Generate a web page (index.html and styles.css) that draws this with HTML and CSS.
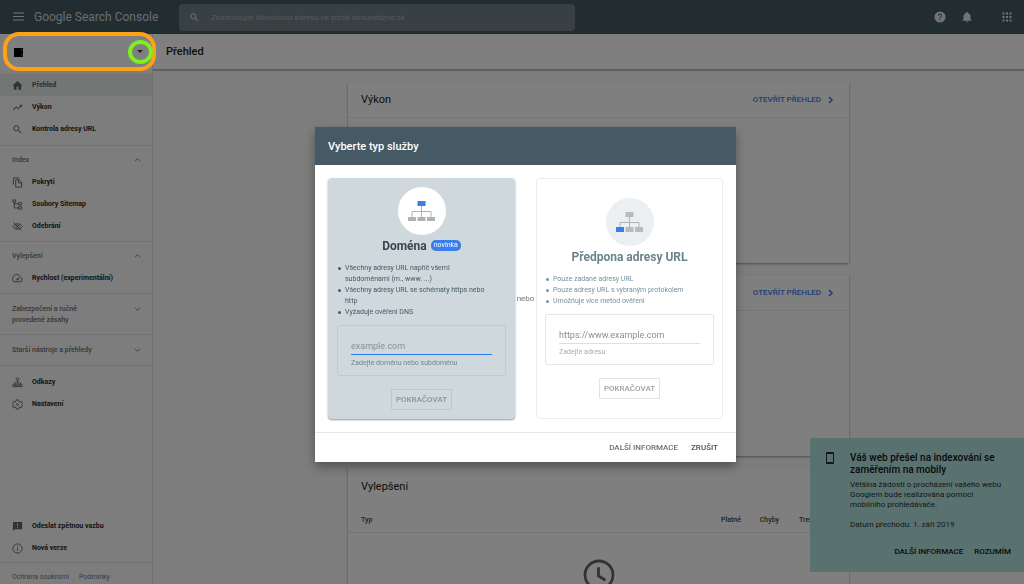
FILE: index.html
```html
<!DOCTYPE html>
<html lang="cs">
<head>
<meta charset="utf-8">
<meta name="viewport" content="width=device-width, initial-scale=1">
<title>Google Search Console</title>
<link rel="stylesheet" href="styles.css">
</head>
<body>
<div class="app">
  <header class="topbar">
    <button class="icon-btn" aria-label="Nabídka"><svg class="ic-menu" viewBox="0 0 12 12"><path d="M0 2h11M0 5.500h11M0 9h11" stroke="currentColor" stroke-width="1.200"/></svg></button>
    <a class="brand" href="#">Google Search Console</a>
    <label class="search">
      <svg class="ic" viewBox="0 0 24 24"><path fill="currentColor" d="M15.500 14h-.8l-.3-.3A6.500 6.500 0 1 0 13.700 14.400l.3.300v.8l5 5 1.500-1.500zm-6 0a4.500 4.500 0 1 1 0-9 4.500 4.500 0 0 1 0 9z"/></svg>
      <input type="search" aria-label="Kontrola adresy URL" placeholder="Zkontrolujte libovolnou adresu ve zdroji besuvetizne.sk">
    </label>
    <div class="tools">
      <button class="icon-btn" aria-label="Nápověda"><svg class="ic-lg" viewBox="0 0 24 24"><path fill="currentColor" d="M12 1a11 11 0 1 0 0 22 11 11 0 0 0 0-22zm1 18h-2v-2h2zm2.100-7.700-.9.900C13.400 12.900 13 13.500 13 15h-2v-.5c0-1.100.4-2.100 1.200-2.800l1.200-1.300A2 2 0 1 0 10 9H8a4 4 0 1 1 7.100 2.300z"/></svg></button>
      <button class="icon-btn" aria-label="Oznámení"><svg class="ic-lg" viewBox="0 0 24 24"><path fill="currentColor" d="M12 23a2 2 0 0 0 2-2h-4a2 2 0 0 0 2 2zm7-7v-5c0-3.600-2-6.100-5.500-6.800V3a1.500 1.500 0 0 0-3 0v1.200C7 4.900 5 7.400 5 11v5l-2 2.500v1h18v-1z"/></svg></button>
      <button class="icon-btn apps" aria-label="Aplikace"><svg class="ic-lg" viewBox="0 0 24 24"><path fill="currentColor" d="M3 3h4v4H3zm7 0h4v4h-4zM17 3h4v4h-4zM3 10h4v4H3zm7 0h4v4h-4zm7 0h4v4h-4zM3 17h4v4H3zm7 0h4v4h-4zm7 0h4v4h-4z"/></svg></button>
    </div>
  </header>

  <div class="shell">
    <aside class="sidebar">
      <button class="property" aria-label="Vybrat službu"><svg class="favicon" viewBox="0 0 9 9"><path fill="#000" d="M0 0h9v9H0z"/><path d="M7 1l1 1.500M8 6v1.500" stroke="#bbb" stroke-width=".8"/></svg><svg class="caret" viewBox="0 0 6 4"><path d="M0 0h6L3 3z" fill="currentColor"/></svg></button>
      <nav class="nav">
        <div class="group group-top">
          <a class="item active" href="#"><svg class="ic" viewBox="0 0 24 24"><path fill="currentColor" d="M10 21v-7h4v7h6v-9h3L12 2 1 12h3v9z"/></svg>Přehled</a>
          <a class="item" href="#"><svg class="ic" viewBox="0 0 24 24"><path fill="currentColor" d="M16 6l2.300 2.300-4.900 4.900-4-4L2 16.600 3.400 18l6-6 4 4 6.300-6.300L22 12V6z"/></svg>Výkon</a>
          <a class="item" href="#"><svg class="ic" viewBox="0 0 24 24"><path fill="currentColor" d="M15.500 14h-.8l-.3-.3A6.500 6.500 0 1 0 13.700 14.400l.3.300v.8l5 5 1.500-1.500zm-6 0a4.500 4.500 0 1 1 0-9 4.500 4.500 0 0 1 0 9z"/></svg>Kontrola adresy URL</a>
        </div>
        <div class="group">
          <button class="section">Index<svg class="chev" viewBox="0 0 8 6"><path d="M1 4.500l3-3 3 3"/></svg></button>
          <a class="item" href="#"><svg class="ic line" viewBox="0 0 24 24"><path d="M3 17V2h13M8 6h7l6 6v10H8zM14 6v7h7"/></svg>Pokrytí</a>
          <a class="item" href="#"><svg class="ic line" viewBox="0 0 24 24"><path d="M2 2h6v5H2zM14 8h7v5h-7zM14 17h7v5h-7zM5 7v12.500h9M5 10.500h9"/></svg>Soubory Sitemap</a>
          <a class="item" href="#"><svg class="ic line" viewBox="0 0 24 24"><path d="M2 12c4-8 16-8 20 0-4 8-16 8-20 0zM3 3l18 18"/><circle cx="12" cy="12" r="3.500"/></svg>Odebrání</a>
        </div>
        <div class="group">
          <button class="section">Vylepšení<svg class="chev" viewBox="0 0 8 6"><path d="M1 4.500l3-3 3 3"/></svg></button>
          <a class="item" href="#"><svg class="ic line" viewBox="0 0 24 24"><path d="M17 6A9 9 0 0 0 4 19h16a9 9 0 0 0 1-9M11 15l8-8"/><circle cx="12" cy="14" r="1.500"/></svg>Rychlost (experimentální)</a>
        </div>
        <div class="group closed">
          <button class="section"><span>Zabezpečení a ručně<br>provedené zásahy</span><svg class="chev" viewBox="0 0 8 6"><path d="M1 1.500l3 3 3-3"/></svg></button>
        </div>
        <div class="group closed">
          <button class="section">Starší nástroje a přehledy<svg class="chev" viewBox="0 0 8 6"><path d="M1 1.500l3 3 3-3"/></svg></button>
        </div>
        <div class="group group-links">
          <a class="item" href="#"><svg class="ic line" viewBox="0 0 24 24"><circle cx="12" cy="5" r="3"/><path d="M12 8v5M5 17v-4h14v4M2 17h6v4H2zM9 17h6v4H9zM16 17h6v4h-6z"/></svg>Odkazy</a>
          <a class="item" href="#"><svg class="ic line" viewBox="0 0 24 24"><path d="M9.500 2h5l.8 3.200 2 1.200 3.200-1 2.500 4.200-2.400 2.400 2.400 2.400-2.500 4.200-3.200-1-2 1.200-.8 3.200h-5l-.8-3.200-2-1.200-3.200 1L1 14.400 3.400 12 1 9.600l2.500-4.200 3.200 1 2-1.200z"/><circle cx="12" cy="12" r="2"/></svg>Nastavení</a>
        </div>
      </nav>
      <div class="bottom">
        <a class="item" href="#"><svg class="ic" viewBox="0 0 24 24"><path fill="currentColor" fill-rule="evenodd" d="M2 2h20v16H6l-4 4zm9 3v6h2V5zm0 8v2h2v-2z"/></svg>Odeslat zpětnou vazbu</a>
        <a class="item" href="#"><svg class="ic line" viewBox="0 0 24 24"><circle cx="12" cy="12" r="10"/><path d="M12 7v2M12 11v6"/></svg>Nová verze</a>
      </div>
      <div class="legal"><a href="#">Ochrana soukromí</a><a href="#">Podmínky</a></div>
    </aside>

    <main class="main">
      <div class="titlebar"><h1>Přehled</h1></div>
      <div class="content">
        <section class="card">
          <div class="card-head"><h2>Výkon</h2><a href="#">OTEVŘÍT PŘEHLED<svg class="next" viewBox="0 0 6 8"><path d="M1 1l3 3-3 3"/></svg></a></div>
        </section>
        <section class="card">
          <div class="card-head"><h2 aria-label="Pokrytí"></h2><a href="#">OTEVŘÍT PŘEHLED<svg class="next" viewBox="0 0 6 8"><path d="M1 1l3 3-3 3"/></svg></a></div>
        </section>
        <section class="card">
          <div class="card-head plain"><h2>Vylepšení</h2></div>
          <table class="table">
            <thead><tr><th class="wide">Typ</th><th>Platné</th><th>Chyby</th><th>Trend</th><th class="last"></th></tr></thead>
          </table>
          <svg class="clock" viewBox="0 0 24 24"><circle cx="12" cy="12" r="8"/><path d="M11.700 7.500v5l4 2.500"/></svg>
        </section>
      </div>
    </main>
  </div>

  <aside class="toast">
    <svg class="phone" viewBox="0 0 8 12"><path fill="currentColor" fill-rule="evenodd" d="M1 0h6a1 1 0 0 1 1 1v10a1 1 0 0 1-1 1H1a1 1 0 0 1-1-1V1a1 1 0 0 1 1-1zm0 2v8h6V2z"/></svg>
    <div class="toast-text">
      <h3>Váš web přešel na indexování se zaměřením na mobily</h3>
      <p>Většina žádostí o procházení vašeho webu Googlem bude realizována pomocí<br>mobilního prohledávače.</p>
      <p class="date">Datum přechodu: 1. září 2019</p>
      <div class="toast-actions"><button>DALŠÍ INFORMACE</button><button>ROZUMÍM</button></div>
    </div>
  </aside>
</div>

<div class="scrim">
  <div class="modal" role="dialog" aria-labelledby="dlg-title">
    <h2 class="modal-head" id="dlg-title">Vyberte typ služby</h2>
    <div class="modal-body">
      <section class="option selected">
        <div class="disc"><svg viewBox="0 0 27 20"><path d="M13.500 5v11M4 16v-5.500h19V16" fill="none" stroke="#b0b3b5"/><path fill="#3b7de9" d="M9.500 0h8v5h-8z"/><path fill="#b0b3b5" d="M0 16h8v4H0zM9.500 16h8v4h-8zM19 16h8v4h-8z"/></svg></div>
        <h3>Doména<span class="pill">novinka</span></h3>
        <ul>
          <li>Všechny adresy URL napříč všemi subdoménami (m., www. ...)</li>
          <li>Všechny adresy URL se schématy https nebo http</li>
          <li>Vyžaduje ověření DNS</li>
        </ul>
        <div class="field"><input id="domain" type="text" placeholder="example.com"><label for="domain">Zadejte doménu nebo subdoménu</label></div>
        <button class="go">POKRAČOVAT</button>
      </section>
      <span class="or">nebo</span>
      <section class="option">
        <div class="disc"><svg viewBox="0 0 27 20"><path d="M13.500 5v11M4 16v-5.500h19V16" fill="none" stroke="#b0b3b5"/><path fill="#b8babc" d="M9.500 0h8v5h-8zM9.500 15h8v5h-8zM19 15h8v5h-8z"/><path fill="#3b7de9" d="M0 15h8v5H0z"/></svg></div>
        <h3>Předpona adresy URL</h3>
        <ul>
          <li>Pouze zadané adresy URL</li>
          <li>Pouze adresy URL s vybraným protokolem</li>
          <li>Umožňuje více metod ověření</li>
        </ul>
        <div class="field"><input id="prefix" type="text" placeholder="https://www.example.com"><label for="prefix">Zadejte adresu</label></div>
        <button class="go">POKRAČOVAT</button>
      </section>
    </div>
    <div class="modal-foot"><button>DALŠÍ INFORMACE</button><button class="cancel">ZRUŠIT</button></div>
  </div>
</div>

<div class="mark mark-property"></div>
<div class="mark mark-caret"></div>
</body>
</html>
```

FILE: styles.css
```css
* { box-sizing: border-box; }
body {
  margin: 0;
  font: 7px/11px Roboto, "Liberation Sans", sans-serif;
  color: #212121;
  background: #fafafa;
}
h1, h2, h3, p, ul { margin: 0; padding: 0; }
button, input { font: inherit; color: inherit; background: none; border: 0; padding: 0; margin: 0; }
a { color: inherit; text-decoration: none; }
svg { display: block; flex: none; }

.app { display: flex; flex-direction: column; height: 100vh; overflow: hidden; }

/* Top bar */
.topbar {
  display: flex;
  align-items: center;
  height: 34px;
  flex: none;
  padding: 0 11px 0 13px;
  background: #455a64;
  color: #e4e8ea;
}
.ic-menu { width: 12px; height: 12px; }
.ic { width: 11px; height: 11px; }
.ic-lg { width: 12px; height: 12px; }
.brand { margin-left: 9px; width: 145px; font-size: 12px; line-height: 16px; white-space: nowrap; color: #d4dade; }
.search {
  display: flex;
  align-items: center;
  gap: 11px;
  flex: 0 1 396px;
  height: 27px;
  padding: 0 10px;
  border-radius: 4px;
  background: #708086;
}
.search input { flex: 1; min-width: 0; font-size: 8px; outline: 0; }
.search input::placeholder { color: #a8b3b7; opacity: 1; }
.tools { display: flex; align-items: center; gap: 15px; margin-left: auto; }
.apps { margin-left: 13px; }

/* Sidebar */
.shell { display: flex; flex: 1; min-height: 0; }
.sidebar {
  display: flex;
  flex-direction: column;
  flex: none;
  width: 153px;
  border-right: 1px solid #e6e6e6;
}
.property {
  display: flex;
  align-items: center;
  justify-content: space-between;
  height: 36px;
  margin-bottom: 4px;
  padding: 0 9px 0 14px;
  background: #fff;
}
.favicon { width: 9px; height: 9px; }
.caret { width: 6px; height: 4px; color: #37474f; }
.item {
  display: flex;
  align-items: center;
  gap: 9px;
  height: 22px;
  padding-left: 12px;
  font-weight: 700;
  color: #2a2a2a;
}
.item svg { color: #606468; }
.item.active { background: #e8eaea; color: #546066; }
.line { fill: none; stroke: currentColor; stroke-width: 2; }
.group { padding: 8px 0 4px; border-bottom: 1px solid #e4e4e4; }
.group-top { padding: 0 0 5px; }
.group-links { padding-top: 5px; border: 0; }
.closed { padding: 9px 0 5px; }
.section {
  display: flex;
  justify-content: space-between;
  width: 100%;
  min-height: 14px;
  margin-bottom: 3px;
  padding: 1px 11px 1px 12px;
  text-align: left;
  font-weight: 500;
  color: #707070;
}
.closed .section { margin-bottom: 2px; }
.chev { width: 7px; height: 6px; margin-top: 2px; fill: none; stroke: #777; }
.bottom { margin-top: auto; padding-bottom: 3px; border-bottom: 1px solid #e4e4e4; }
.legal { display: flex; gap: 10px; padding: 9px 12px 1px; color: #757575; }

/* Main */
.main { flex: 1; min-width: 0; overflow: hidden; }
.titlebar {
  display: flex;
  align-items: center;
  height: 36px;
  padding-left: 13px;
  background: #fff;
  border-bottom: 1px solid #b8b8b8;
  box-shadow: 0 1px 1px #ccc;
}
h1 { font-size: 11px; line-height: 14px; font-weight: 500; }
.content { display: grid; gap: 12px; max-width: 521px; margin: 0 auto; padding: 12px 0 0 20px; }
.card { height: 181px; background: #fff; box-shadow: 0 1px 2px #999; }
.card-head {
  display: flex;
  align-items: center;
  justify-content: space-between;
  height: 36px;
  padding: 0 15px 0 13px;
  border-bottom: 1px solid #ececec;
}
.card-head.plain { height: 37px; border: 0; }
.card-head h2 { font-size: 11px; line-height: 14px; font-weight: 400; }
.card-head a { display: flex; align-items: center; gap: 7px; font-size: 8px; font-weight: 500; color: #3b78e7; }
.next { width: 6px; height: 8px; fill: none; stroke: currentColor; stroke-width: 1.500; }
.table { width: 100%; border-collapse: collapse; table-layout: fixed; border-bottom: 1px solid #e8e8e8; }
.table th { width: 38px; height: 27px; padding: 4px 0 0; text-align: right; font-weight: 500; color: #444; }
.table .wide { width: auto; padding-left: 13px; text-align: left; }
.table .last { width: 32px; }
.clock { width: 42px; height: 42px; margin: 21px auto 0; fill: none; stroke: #666; stroke-width: 1.600; }

/* Toast */
.toast {
  position: fixed;
  right: 0;
  bottom: 12px;
  display: flex;
  gap: 16px;
  width: 214px;
  padding: 14px 13px 15px 16px;
  background: #b5e5df;
  color: #1d302e;
  border-radius: 1px;
}
.phone { width: 8px; height: 12px; }
.toast-text { flex: 1; }
.toast h3 { font-size: 10px; line-height: 12px; font-weight: 500; color: #111; }
.toast p { margin-top: 4px; font-size: 8px; line-height: 10px; }
.toast .date { margin-top: 10px; }
.toast-actions { display: flex; justify-content: flex-end; gap: 11px; margin-top: 16px; }
.toast-actions button { font-size: 8px; font-weight: 500; color: #111; }

/* Dialog */
.scrim {
  position: fixed;
  inset: 0;
  display: flex;
  align-items: center;
  justify-content: center;
  padding: 4px 0 0 27px;
  background: rgba(0, 0, 0, .5);
}
.modal { width: 421px; background: #fff; box-shadow: 0 5px 10px rgba(0, 0, 0, .35); }
.modal-head { padding: 13px 13px 11px; font-size: 11px; line-height: 14px; font-weight: 500; background: #455a64; color: #fff; }
.modal-body { display: grid; grid-template-columns: 1fr auto 1fr; align-items: center; padding: 13px; border-bottom: 1px solid #e8e8e8; }
.or { display: flex; justify-content: center; width: 21px; font-size: 8px; white-space: nowrap; color: #757575; }
.option {
  display: flex;
  flex-direction: column;
  align-items: center;
  justify-content: center;
  align-self: stretch;
  padding: 8px;
  border: 1px solid #ebebeb;
  border-radius: 4px;
  color: #78909c;
}
.option.selected { background: #cfd8dc; border-color: #cfd8dc; color: #455a64; box-shadow: 0 1px 2px rgba(0, 0, 0, .4); }
.disc { display: grid; place-items: center; width: 48px; height: 48px; border-radius: 50%; background: #eceff1; }
.selected .disc { background: #fff; }
.disc svg { width: 27px; height: 20px; }
.option h3 { display: flex; align-items: center; gap: 4px; padding-top: 1px; font-size: 12px; line-height: 20px; font-weight: 700; color: #6b858f; }
.selected h3 { color: #37474f; }
.pill { padding: 0 3px; border-radius: 5px; font-size: 7px; line-height: 11px; font-weight: 400; background: #3b7de9; color: #fff; }
.option ul { align-self: stretch; margin: 7px 12px 7px 0; padding-left: 8px; list-style: none; }
.option li::before { content: ""; float: left; width: 3px; height: 3px; margin: 4px 0 0 -7px; border-radius: 50%; background: currentColor; }
.field { align-self: stretch; height: 51px; padding: 13px; border: 1px solid #e6e6e6; border-radius: 2px; }
.selected .field { border-color: #c0c9cd; }
.field input { display: block; width: 100%; height: 16px; font-size: 9px; border-bottom: 1px solid #e0e0e0; outline: 0; }
.selected .field input { border-bottom: 1px solid #2f7bf5; }
.field input::placeholder { color: #8a8f92; opacity: 1; }
.field label { display: block; margin-top: 3px; color: #aaa; }
.selected .field label { color: #78868c; }
.go { height: 21px; margin-top: 13px; padding: 0 4px; border: 1px solid #e2e2e2; border-radius: 1px; font-size: 8px; font-weight: 500; color: #a0a0a0; }
.selected .go { border-color: #bdc6ca; color: #8a9498; }
.modal-foot { display: flex; justify-content: flex-end; gap: 13px; padding: 9px 18px; }
.modal-foot button { font-size: 8px; font-weight: 500; color: #6a6f72; }
.modal-foot .cancel { color: #37566a; }

/* Highlight outlines over the property picker */
.mark { position: fixed; pointer-events: none; }
.mark-property { left: 3px; top: 32px; width: 153px; height: 39px; border: 4px solid #ffa114; border-radius: 16px; }
.mark-caret { left: 128px; top: 40px; width: 25px; height: 24px; border: 4px solid #7df01e; border-radius: 50%; }
```
